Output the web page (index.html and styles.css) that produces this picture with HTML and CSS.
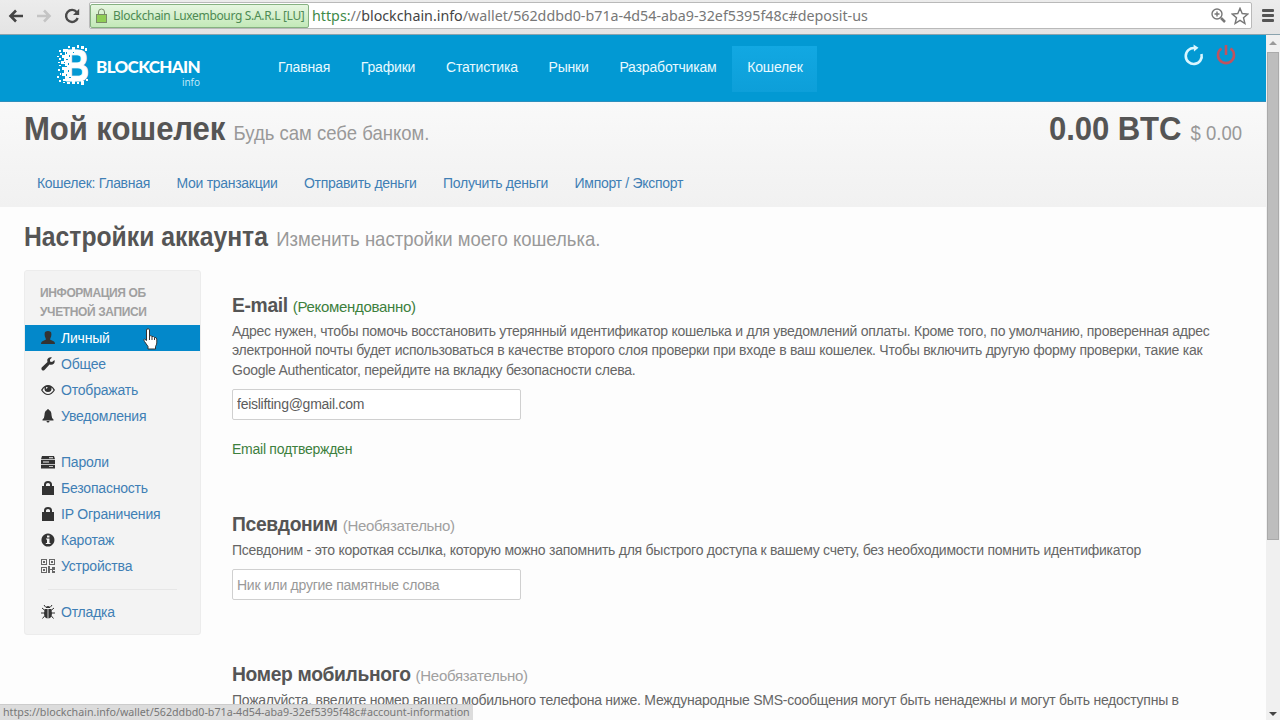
FILE: index.html
```html
<!DOCTYPE html>
<html lang="ru">
<head>
    <meta charset="UTF-8">
    <meta name="viewport" content="width=device-width, initial-scale=1.0">
    <title>Мой кошелек</title>
    <link rel="stylesheet" href="styles.css">
</head>
<body>
    <!-- Browser toolbar -->
    <div class="toolbar">
        <svg class="tool-back" width="16" height="14" viewBox="0 0 16 14"><path d="M8 1.5L2.5 7L8 12.500M3 7H15" /></svg>
        <svg class="tool-forward" width="16" height="14" viewBox="0 0 16 14"><path d="M8 1.500L13.500 7L8 12.500M13 7H1" /></svg>
        <svg class="tool-reload" width="16" height="16" viewBox="0 0 16 16"><path class="arc" d="M12.800 4.200A6 6 0 1 0 13.700 10" /><path class="head" d="M15.200 0.800V7H9z" /></svg>
        <div class="address">
            <div class="certificate">
                <svg width="11" height="15" viewBox="0 0 11 15"><path class="shackle" d="M2.500 7V4a3 3 0 0 1 6 0V7" /><rect x="0.500" y="6.500" width="10" height="8" /></svg>
                <span>Blockchain Luxembourg S.A.R.L [LU]</span>
            </div>
            <span class="url"><span class="secure">https:</span>//<b>blockchain.info</b>/wallet/562ddbd0-b71a-4d54-aba9-32ef5395f48c#deposit-us</span>
            <svg class="zoom" width="15" height="15" viewBox="0 0 15 15"><circle cx="6" cy="6" r="5" /><path d="M3.500 6H8.500M6 3.500V8.500" /><path class="handle" d="M10 10L14 14" /></svg>
            <svg class="star" width="18" height="18" viewBox="0 0 18 18"><path d="M9 1.300L11.200 6.500L16.800 7L12.500 10.700L13.900 16.500L9 13.400L4.100 16.500L5.500 10.700L1.200 7L6.800 6.500z" /></svg>
        </div>
        <div class="menu"><i></i><i></i><i></i></div>
    </div>

    <div class="window">
        <div class="page">
            <header class="header">
                <a class="logo">
                    <svg class="logo-mark" width="34" height="44" viewBox="0 0 34 44">
                        <text x="7" y="37" textLength="25" lengthAdjust="spacingAndGlyphs">B</text>
                        <path class="pixels" d="M6 5h5v2h5v3h-3v22h3v3h-5v2h-5v-2h2v-3h-3v-3h2v-3h-2v-3h3v-3h-4v-3h3v-3h-2v-3h3v-3h-2zM11 2h2v2h-2zM15 3h3v3h-3zM20 1h2v3h-2zM24 2h3v3h-3zM28 4h2v3h-2zM2 6h2v2h-2zM3 9h2v2h-2zM0 12h2v1h-2zM2 14h2v2h-2zM1 18h2v1h-2zM2 21h2v1h-2zM1 25h2v2h-2zM3 29h1v2h-1zM0 32h2v2h-2zM2 36h2v2h-2zM6 38h2v1h-2zM10 38h3v2h-3zM15 36h3v4h-3zM20 38h2v2h-2zM24 37h3v4h-3zM29 35h2v2h-2z" />
                        <path class="holes" d="M9 8h1v2h-1zM12 11h1v2h-1zM9 15h2v1h-2zM7 18h1v1h-1zM11 19h1v2h-1zM8 22h2v1h-2zM11 26h1v2h-1zM9 30h1v2h-1zM12 33h2v1h-2zM16 8h1v1h-1z" />
                    </svg>
                    <span class="logo-text"><b>BLOCKCHAIN</b><small>info</small></span>
                </a>
                <nav class="main-nav">
                    <a>Главная</a>
                    <a>Графики</a>
                    <a>Статистика</a>
                    <a>Рынки</a>
                    <a>Разработчикам</a>
                    <a class="active">Кошелек</a>
                </nav>
                <div class="session">
                    <svg width="20" height="22" viewBox="0 0 20 22"><path d="M10.500 4A8 8 0 1 0 17.500 10" /><path class="tip" d="M9.500 0.500L14.500 3.800L10 7.500z" /></svg>
                    <svg class="power" width="20" height="22" viewBox="0 0 20 22"><path d="M5.500 4.500A8 8 0 1 0 14.500 4.500M10 1V11" /></svg>
                </div>
            </header>

            <section class="wallet">
                <div class="wallet-title">
                    <div class="title-left">
                        <h1>Мой кошелек</h1>
                        <span class="slogan">Будь сам себе банком.</span>
                    </div>
                    <div class="title-right">
                        <b class="balance">0.00 BTC</b>
                        <span class="balance-usd">$ 0.00</span>
                    </div>
                </div>
                <nav class="wallet-nav">
                    <a>Кошелек: Главная</a>
                    <a>Мои транзакции</a>
                    <a>Отправить деньги</a>
                    <a>Получить деньги</a>
                    <a>Импорт / Экспорт</a>
                </nav>
            </section>

            <div class="settings-title">
                <div class="title-left">
                    <h2>Настройки аккаунта</h2>
                    <span class="slogan">Изменить настройки моего кошелька.</span>
                </div>
            </div>

            <div class="settings">
                <aside class="sidebar">
                    <h4>Информация об<br>учетной записи</h4>
                    <a class="active"><svg viewBox="0 0 14 14"><path d="M4 1Q7-1 10 1Q11 4 9.500 7L9 8.500L13 10.500Q14 11 14 13H0Q0 11 1 10.500L5 8.500L4.500 7Q3 4 4 1z" /></svg>Личный</a>
                    <a><svg viewBox="0 0 14 14"><path d="M13.500 3L11 5L9 4.500L9 2.500L11 0.500Q8-.5 6.500 2Q6 3.500 6.500 5L.7 10.500Q0 12 1 13Q2 14 3.500 13L8.500 7.500Q11 8.500 13 6.500Q14 5 13.500 3z" /></svg>Общее</a>
                    <a><svg viewBox="0 0 14 14"><path fill-rule="evenodd" d="M0 7Q3 2 7 2T14 7Q11 12 7 12T0 7zM1.500 7.300Q4 11 7 11T12.500 7.300Q11.500 5 10.500 4.500Q11 9 7 9T3.500 4.500Q2.300 5.500 1.500 7.300zM5 4Q5 6 6 6Q5.800 4.500 7 4z" /></svg>Отображать</a>
                    <a><svg viewBox="0 0 14 14"><path d="M6 1Q7-1 8 1Q10.500 2 10.500 6Q10.500 9 12.500 10.500V11.500H1.500V10.500Q3.500 9 3.500 6Q3.500 2 6 1zM5.500 12H8.500Q8.500 13.500 7 13.500T5.500 12z" /></svg>Уведомления</a>
                    <hr class="blank">
                    <a><svg viewBox="0 0 14 14"><path fill-rule="evenodd" d="M1 1H13L14 4.300H0zM0 5H14V9H0zM0 9.700H14V13.500H0zM8 2.300V3.200H12V2.300zM2 6.600V7.500H8V6.600zM8 11.200V12.100H12V11.200z" /></svg>Пароли</a>
                    <a><svg viewBox="0 0 14 14"><path fill-rule="evenodd" d="M3 5V3.500Q3 0 7 0T11 3.500V5H13V14H1V5zM5 5H9V3.500Q9 2 7 2T5 3.500z" /></svg>Безопасность</a>
                    <a><svg viewBox="0 0 14 14"><path fill-rule="evenodd" d="M3 5V3.500Q3 0 7 0T11 3.500V5H13V14H1V5zM5 5H9V3.500Q9 2 7 2T5 3.500z" /></svg>IP Ограничения</a>
                    <a><svg viewBox="0 0 14 14"><path fill-rule="evenodd" d="M7 .5A6.500 6.500 0 1 1 6.900 .5zM6 2.500H8.500V4.500H6zM5 5.500H8.500V10H9.500V11H4.800V10H6V6.500H5z" /></svg>Каротаж</a>
                    <a><svg class="qr" viewBox="0 0 14 14"><path fill-rule="evenodd" d="M0 0H6V6H0zM1 1V5H5V1zM2 2H4V4H2zM8 0H14V6H8zM9 1V5H13V1zM10 2H12V4H10zM0 8H6V14H0zM1 9V13H5V9zM2 10H4V12H2zM7 7H9V10H11V8H14V11H12V12H14V14H11V11H9V14H7z" /></svg>Устройства</a>
                    <hr>
                    <a><svg viewBox="0 0 14 14"><path d="M4.500 3Q5 1 7 1T9.500 3zM3.800 4H6.600V13.500Q3 13 3 8zM7.400 4H10.200L11 8Q11 13 7.400 13.500z" /><path class="legs" d="M4.500 2L3 0M9.500 2L11 0M4 5.500L1 3M10 5.500L13 3M3.500 8H0M10.500 8H14M4 10.500L1.500 13.500M10 10.500L12.500 13.500" /></svg>Отладка</a>
                </aside>

                <main class="fields">
                    <div class="field email">
                        <h3>E-mail <small class="good">(Рекомендованно)</small></h3>
                        <p>Адрес нужен, чтобы помочь восстановить утерянный идентификатор кошелька и для уведомлений оплаты. Кроме того, по умолчанию, проверенная адрес<br>
                        электронной почты будет использоваться в качестве второго слоя проверки при входе в ваш кошелек. Чтобы включить другую форму проверки, такие как<br>
                        Google Authenticator, перейдите на вкладку безопасности слева.</p>
                        <input type="text" value="feislifting@gmail.com">
                        <p class="good verified">Email подтвержден</p>
                    </div>
                    <div class="field alias">
                        <h3>Псевдоним <small>(Необязательно)</small></h3>
                        <p>Псевдоним - это короткая ссылка, которую можно запомнить для быстрого доступа к вашему счету, без необходимости помнить идентификатор</p>
                        <input type="text" placeholder="Ник или другие памятные слова">
                    </div>
                    <div class="field phone">
                        <h3>Номер мобильного <small>(Необязательно)</small></h3>
                        <p>Пожалуйста, введите номер вашего мобильного телефона ниже. Международные SMS-сообщения могут быть ненадежны и могут быть недоступны в</p>
                    </div>
                </main>
            </div>
        </div>
        <div class="scrollbar">
            <i class="up"></i>
            <div class="thumb"></div>
            <i class="down"></i>
        </div>
    </div>

    <div class="status">https://blockchain.info/wallet/562ddbd0-b71a-4d54-aba9-32ef5395f48c#account-information</div>
    <svg class="pointer" width="15" height="22" viewBox="0 0 15 22"><path d="M4 1Q6 0 6.500 2V8Q8 7 9 8.500Q10.500 8 11.300 9.500Q13.500 9 13.800 11V15Q13.500 17 12.500 18.500V21H5V18.500L1.500 13.500Q0 11.500 1.500 11L3.500 12.500V2z" /><path d="M6.500 8V12M9 9V12M11.500 10V12" /></svg>
</body>
</html>
```

FILE: styles.css
```css
* {
    box-sizing: border-box;
}
body {
    margin: 0;
    height: 720px;
    overflow: hidden;
    display: flex;
    flex-direction: column;
    font-family: "Liberation Sans", Arial, sans-serif;
    font-size: 14px;
    color: #666;
    background: #fdfdfd;
}
h1, h2, h3, h4, p {
    margin: 0;
}
a {
    color: #3f7fb5;
    white-space: nowrap;
}

/* Browser toolbar */
.toolbar {
    height: 35px;
    flex: none;
    display: flex;
    align-items: flex-start;
    background: linear-gradient(#ececec, #e4e4e4);
    border-bottom: 1px solid #8aa3ae;
    padding: 2px 0 0 8px;
}
.toolbar svg {
    fill: none;
    flex: none;
}
.tool-back, .tool-forward {
    stroke: #444;
    stroke-width: 2.6;
    margin: 7px 12px 0 0;
}
.toolbar .tool-forward {
    stroke: #c4c4c4;
}
.tool-reload {
    margin: 6px 9px 0 0;
}
.tool-reload .arc {
    stroke: #4a4a4a;
    stroke-width: 2.4;
}
.toolbar .head {
    fill: #4a4a4a;
}
.address {
    width: 1163px;
    height: 27px;
    display: flex;
    align-items: center;
    background: #fff;
    border: 1px solid #b9b9b9;
    border-radius: 2px;
    font-family: "Noto Sans", sans-serif;
}
.certificate {
    width: 219px;
    height: 24px;
    display: flex;
    align-items: center;
    gap: 6px;
    padding-left: 5px;
    background: linear-gradient(#e6f6e0, #c3e9b8);
    border: 1px solid #86b181;
    border-radius: 2px;
    font-size: 12px;
    letter-spacing: -0.33px;
    color: #4e8a54;
    white-space: nowrap;
}
.certificate svg {
    stroke: #7a8c6a;
}
.certificate rect {
    fill: #8fce55;
}
.url {
    flex: 1;
    margin-left: 3px;
    font-size: 14.28px;
    color: #777;
    white-space: nowrap;
}
.url b {
    font-weight: normal;
    color: #444;
}
.url .secure {
    color: #3e8a48;
}
.zoom, .star {
    stroke: #777;
    stroke-width: 1.4;
}
.zoom .handle {
    stroke-width: 2.5;
}
.star {
    margin: 0 2px 0 5px;
}
.menu {
    display: grid;
    gap: 2px;
    margin: 7px 0 0 10px;
}
.menu i {
    width: 12px;
    height: 3px;
    border-radius: 1px;
    background: #555;
}

.window {
    flex: 1;
    min-height: 0;
    display: flex;
}
.page {
    width: 1266px;
    overflow: hidden;
}

/* Blue header */
.header {
    height: 67px;
    display: flex;
    align-items: flex-start;
    background: #0299d3;
    border-bottom: 1px solid #2d8fbd;
}
.logo {
    width: 207px;
    padding: 9px 0 0 57px;
    display: flex;
    color: #fff;
}
.logo-mark {
    flex: none;
    fill: #fff;
    overflow: visible;
}
.logo-mark text {
    font-size: 44px;
    font-weight: bold;
    stroke: #fff;
    stroke-width: 1;
}
.logo-mark .holes {
    fill: #0299d3;
}
.logo-text {
    width: 104px;
    flex: none;
    margin: 13px 0 0 5px;
    text-align: right;
    line-height: 20px;
}
.logo-text b {
    display: block;
    font-family: Lato, sans-serif;
    font-weight: 900;
    font-size: 17px;
    letter-spacing: -0.65px;
}
.logo-text small {
    display: block;
    font-family: "Open Sans", sans-serif;
    font-size: 10px;
    line-height: 10px;
    color: #c8ecfa;
}
.main-nav {
    display: flex;
    margin: 11px 0 0 56px;
    letter-spacing: -0.17px;
}
.main-nav a {
    height: 46px;
    line-height: 43px;
    padding: 0 15.7px 0 15px;
    color: #e8f9ff;
}
.main-nav .active {
    padding-right: 14.5px;
    background: linear-gradient(#12a8e2, #0d9fd9);
}
.session {
    display: flex;
    gap: 12px;
    margin: 9px 30px 0 auto;
}
.session svg {
    fill: none;
    stroke: #d9f6ff;
    stroke-width: 2.6;
}
.session .tip {
    fill: #d9f6ff;
    stroke: none;
}
.session .power {
    stroke: #c0535f;
}

/* Wallet title and tabs */
.wallet {
    height: 105px;
    background: linear-gradient(#f9f9f9, #f1f1f1);
}
.wallet-title {
    height: 54px;
    display: flex;
    justify-content: space-between;
    padding: 6px 24px 0;
}
/* Headings are set slightly condensed */
.title-left, .title-right {
    display: flex;
    align-items: baseline;
    line-height: 40px;
    white-space: nowrap;
    transform: scaleX(0.915);
    transform-origin: left;
}
.title-right {
    transform-origin: right;
}
h1, .balance {
    font-size: 34px;
    font-weight: bold;
    letter-spacing: -0.1px;
    color: #555;
}
.slogan, .balance-usd {
    margin-left: 9px;
    font-size: 20.25px;
    color: #999;
}
.balance-usd {
    margin-left: 10px;
}
.wallet-nav {
    display: flex;
    gap: 26.5px;
    padding: 17px 0 0 37px;
    line-height: 20px;
    letter-spacing: -0.29px;
}
.settings-title {
    height: 63px;
    display: flex;
    padding: 10px 0 0 24px;
}
h2 {
    font-size: 27px;
    color: #555;
}
.settings {
    display: flex;
    letter-spacing: -0.255px;
}

/* Left menu */
.sidebar {
    width: 177px;
    height: 365px;
    margin-left: 24px;
    padding-top: 13px;
    background: #f3f3f3;
    border: 1px solid #ececec;
    border-radius: 3px;
}
.sidebar h4 {
    padding-left: 15px;
    font-size: 12px;
    line-height: 19px;
    height: 41px;
    letter-spacing: -0.38px;
    text-transform: uppercase;
    color: #a0a0a0;
}
.sidebar a {
    height: 26px;
    display: flex;
    align-items: center;
    gap: 6px;
    padding-left: 16px;
    letter-spacing: -0.2px;
}
.sidebar .active {
    color: #fff;
    background: #0388ca;
}
.sidebar svg {
    width: 14px;
    height: 14px;
    fill: #333;
}
.sidebar .legs {
    fill: none;
    stroke: #333;
}
.sidebar .qr {
    fill: #666;
}
.sidebar hr {
    height: 1px;
    margin: 10px 23px 9px;
    border: 0;
    background: #e6e6e6;
}
.sidebar .blank {
    background: none;
}

/* Settings fields */
.fields {
    margin-left: 31px;
    white-space: nowrap;
}
.field {
    line-height: 19.3px;
}
.email {
    height: 219px;
    padding-top: 22px;
}
.alias {
    height: 150px;
}
.alias, .phone {
    padding-top: 22px;
}
h3 {
    height: 30px;
    font-size: 19.3px;
    line-height: 28px;
    letter-spacing: -0.35px;
    color: #555;
}
h3 small {
    font-size: 15px;
    font-weight: normal;
    letter-spacing: -0.3px;
    color: #a0a0a0;
}
.good, h3 .good {
    color: #3d803d;
}
input {
    display: block;
    width: 289px;
    height: 31px;
    margin-top: 9px;
    padding: 0 4px;
    font: inherit;
    letter-spacing: inherit;
    color: #5c5c5c;
    background: #fff;
    border: 1px solid #d0d0d0;
    border-radius: 2px;
}
input::placeholder {
    color: #999;
}
.verified {
    margin-top: 20px;
}

.scrollbar {
    width: 14px;
    display: flex;
    flex-direction: column;
    align-items: center;
    background: #f0f0f0;
}
.scrollbar i {
    margin: 7px 0;
    border: 4px solid transparent;
}
.scrollbar .up {
    margin-top: 2px;
    border-bottom-color: #999;
}
.scrollbar .down {
    margin: auto 0 0;
    border-top-color: #444;
}
.thumb {
    width: 12px;
    height: 488px;
    background: #bdbdbd;
    border: 1px solid #aaa;
}

/* Link address over the page bottom */
.status {
    position: absolute;
    left: 0;
    bottom: 0;
    width: 473px;
    height: 16px;
    padding-left: 3px;
    background: #dcdcdc;
    border-top: 1px solid #ccc;
    font: 10.7px/15px "Noto Sans", sans-serif;
    color: #777;
    white-space: nowrap;
}
.pointer {
    position: absolute;
    left: 143px;
    top: 328px;
    fill: #fff;
    stroke: #333;
}
```
